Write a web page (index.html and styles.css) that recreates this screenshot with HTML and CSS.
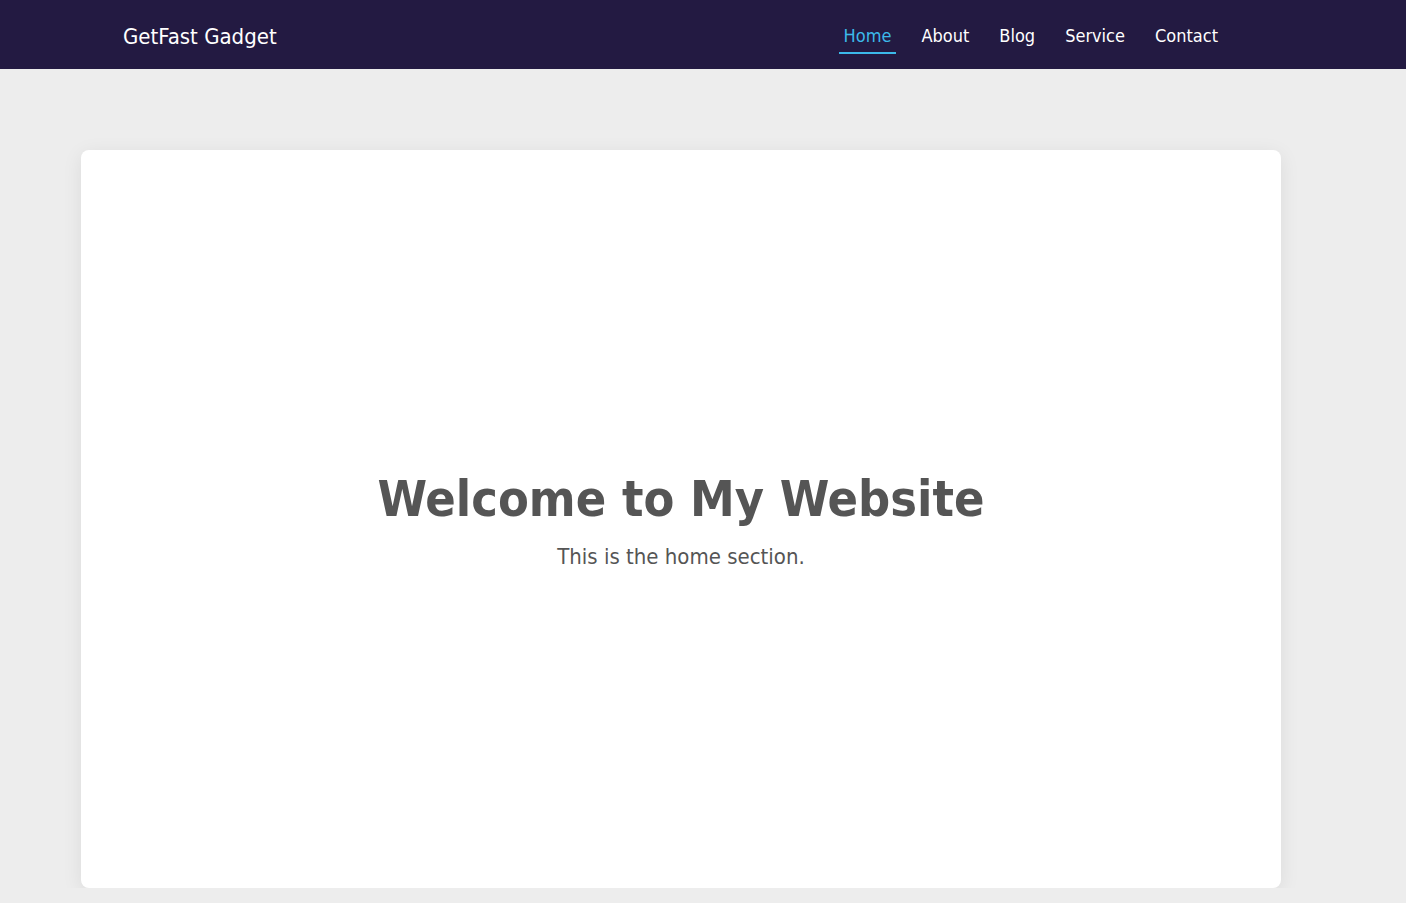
FILE: index.html
```html
<!DOCTYPE html>
<html lang="en">
<head>
<meta charset="utf-8">
<title>GetFast Gadget</title>
<link rel="stylesheet" href="styles.css">
</head>
<body>
<header class="navbar">
  <div class="logo">GetFast Gadget</div>
  <nav class="links">
    <a class="link active" href="#">Home</a>
    <a class="link" href="#">About</a>
    <a class="link" href="#">Blog</a>
    <a class="link" href="#">Service</a>
    <a class="link" href="#">Contact</a>
  </nav>
</header>
<main class="main">
  <section class="card">
    <h1 class="title">Welcome to My Website</h1>
    <p class="subtitle">This is the home section.</p>
  </section>
</main>
</body>
</html>
```
FILE: styles.css
```css
* { box-sizing: border-box; }
html, body { margin: 0; padding: 0; }
body {
  background: #ededed;
  font-family: "DejaVu Sans Condensed", "DejaVu Sans", sans-serif;
  color: #555;
}
.navbar {
  height: 69px;
  background: #231a42;
  display: flex;
  align-items: center;
  justify-content: space-between;
  padding: 3px 183px 0 123px;
}
.logo {
  color: #fff;
  font-size: 22px;
}
.links {
  display: flex;
  gap: 20px;
  align-items: center;
}
.link {
  color: #fff;
  text-decoration: none;
  font-size: 18px;
  padding: 6px 5px;
  border-bottom: 2px solid transparent;
}
.link.active {
  color: #3cb9ea;
  border-bottom-color: #3cb9ea;
}
.main {
  padding: 81px 0 0 81px;
}
.card {
  width: 1200px;
  height: 738px;
  background: #fff;
  border-radius: 8px;
  box-shadow: 0 4px 20px rgba(0,0,0,0.08);
  display: flex;
  flex-direction: column;
  align-items: center;
  justify-content: center;
  text-align: center;
}
.title {
  margin: 0;
  font-size: 50px;
  font-weight: bold;
  color: #555;
}
.subtitle {
  margin: 16px 0 0;
  font-size: 22px;
  color: #555;
}
```
